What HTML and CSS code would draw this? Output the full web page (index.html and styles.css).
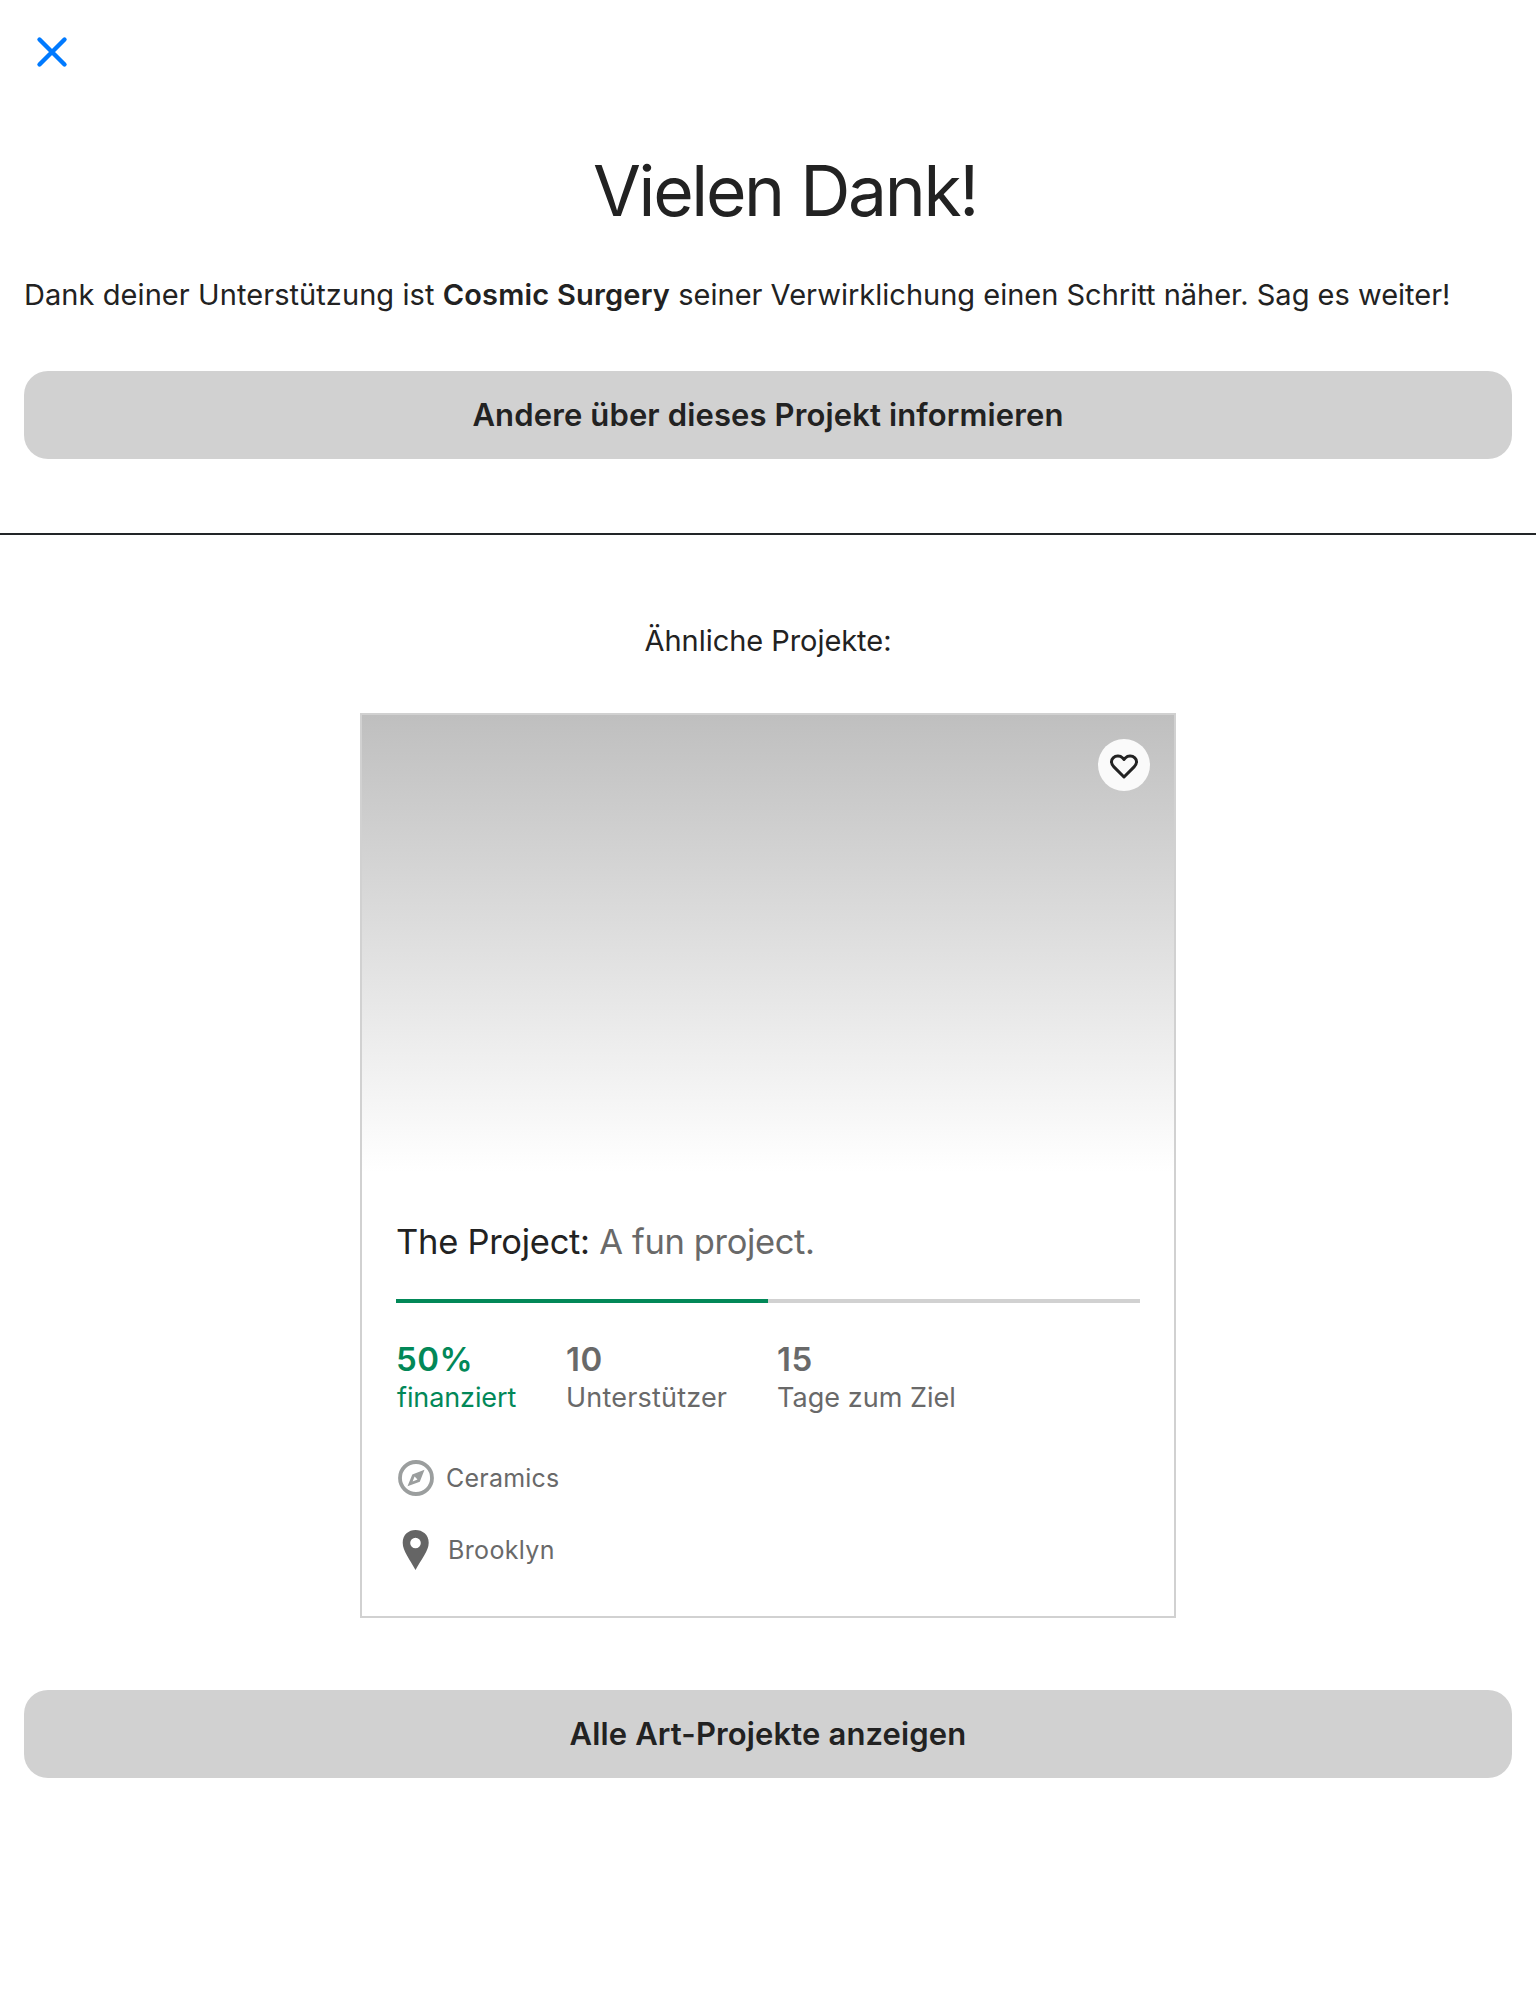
FILE: index.html
```html
<!DOCTYPE html>
<html lang="de">
<head>
<meta charset="utf-8">
<title>Vielen Dank!</title>
<link rel="stylesheet" href="styles.css">
</head>
<body>
<header class="topbar">
  <button class="close" aria-label="Schließen">
    <svg width="32" height="32" viewBox="0 0 32 32"><path d="M3.5 3.5 28.5 28.5M28.5 3.5 3.5 28.5" fill="none" stroke="#007aff" stroke-width="4.4" stroke-linecap="round"/></svg>
  </button>
</header>
<main>
  <section class="thanks">
    <h1 class="title">Vielen Dank!</h1>
    <p class="message"><span class="lead">Dank deiner Unterstützung ist</span> <strong>Cosmic Surgery</strong> seiner Verwirklichung einen Schritt näher. Sag es weiter!</p>
    <button class="button">Andere über dieses Projekt informieren</button>
  </section>
  <section class="related">
    <h2 class="related-title">Ähnliche Projekte:</h2>
    <article class="card">
      <div class="photo">
        <button class="save" aria-label="Merken">
          <svg width="32" height="32" viewBox="0 0 32 32"><path d="M16 28 5.9 17.9C2.8 14.8 2.8 11 5.2 8.8 8 6.2 12.2 6.6 14.4 8.8L16 10.4 17.6 8.8C19.8 6.6 24 6.2 26.8 8.8 29.2 11 29.2 14.8 26.1 17.9Z" fill="none" stroke="#222" stroke-width="3" stroke-linejoin="round"/></svg>
        </button>
      </div>
      <div class="details">
        <h3 class="name">The Project: <span class="blurb">A fun project.</span></h3>
        <div class="progress"><div class="progress-fill" style="width:50%"></div></div>
        <dl class="stats">
          <div class="stat funded"><dt>50%</dt><dd>finanziert</dd></div>
          <div class="stat"><dt>10</dt><dd>Unterstützer</dd></div>
          <div class="stat"><dt>15</dt><dd>Tage zum Ziel</dd></div>
        </dl>
        <div class="tag category">
          <svg width="36" height="36" viewBox="0 0 36 36"><circle cx="18" cy="18" r="16" fill="none" stroke="#9b9e9e" stroke-width="3.8"/><path fill="#9b9e9e" fill-rule="evenodd" d="M26.5 9.7 21.8 21.7 9.5 26.3 14.3 14.5ZM16.6 16.6 14.6 21.6 19.5 19.5Z"/></svg>
          <span>Ceramics</span>
        </div>
        <div class="tag place">
          <svg width="36" height="40" viewBox="0 0 36 40"><path fill="#656565" fill-rule="evenodd" d="M17.5 0C24.5 0 30.7 4.6 30.7 12.7 30.7 21 23 29.5 17.5 40 12 29.5 4.7 21 4.7 12.7 4.7 4.6 10.7 0 17.5 0ZM17.5 7.7A5.3 5.3 0 1 0 17.5 18.3 5.3 5.3 0 1 0 17.5 7.7Z"/></svg>
          <span>Brooklyn</span>
        </div>
      </div>
    </article>
    <button class="button">Alle Art-Projekte anzeigen</button>
  </section>
</main>
</body>
</html>
```
FILE: styles.css
```css
* { box-sizing: border-box; margin: 0; padding: 0; }
body {
  min-height: 2000px;
  background: #fff;
  color: #222;
  font-family: Inter, "Liberation Sans", sans-serif;
}
button { border: 0; font: inherit; color: inherit; }
svg { display: block; flex: none; }

.topbar { height: 104px; padding: 36px; }
.close { background: none; }

.thanks {
  display: flex;
  flex-direction: column;
  padding: 37px 24px 74px;
  border-bottom: 2px solid #222528;
}
.title {
  padding-left: 34px;
  font-size: 69.5px;
  font-weight: 400;
  line-height: 100px;
  letter-spacing: -2.3px;
  text-align: center;
}
.message {
  margin: 34px 0 56px;
  font-size: 29px;
  line-height: 40px;
  white-space: nowrap;
}
.lead { letter-spacing: 0.07px; }
.message strong { font-weight: 600; letter-spacing: 0.2px; }
.button {
  width: 100%;
  height: 88px;
  padding-bottom: 2px;
  border-radius: 24px;
  background: #d1d1d1;
  font-size: 31px;
  font-weight: 600;
  letter-spacing: 0.13px;
}

.related {
  display: flex;
  flex-direction: column;
  align-items: center;
  padding: 86px 24px 0;
}
.related-title {
  font-size: 29px;
  font-weight: 400;
  line-height: 40px;
  letter-spacing: -0.05px;
}
.card {
  width: 816px;
  height: 905px;
  margin: 52px 0 72px;
  border: 2px solid #d1d1d1;
}
.photo {
  display: flex;
  justify-content: flex-end;
  align-items: flex-start;
  height: 457px;
  padding: 24px;
  background: linear-gradient(#bfbfbf, #fff);
}
.save {
  display: flex;
  align-items: center;
  justify-content: center;
  width: 52px;
  height: 52px;
  border-radius: 50%;
  background: #fafafa;
}
.details { padding: 48px 34px 0; }
.name {
  font-size: 34.5px;
  font-weight: 400;
  line-height: 44px;
  letter-spacing: -0.27px;
}
.blurb { color: #696969; letter-spacing: -0.36px; }
.progress { height: 4px; margin: 35px 0 36px; background: #d1d1d1; }
.progress-fill { height: 4px; background: #028858; }
.stats {
  display: grid;
  grid-template-columns: 170px 211px auto;
  color: #696969;
}
.funded { color: #028858; }
.stat dt {
  font-size: 33px;
  font-weight: 600;
  line-height: 40px;
  letter-spacing: 0.45px;
}
.stat dd { font-size: 27px; line-height: 38px; letter-spacing: 0.2px; }
.stat:last-child dd { letter-spacing: 0.04px; }
.funded dd { padding-left: 1px; letter-spacing: -0.1px; }
.tag {
  display: flex;
  align-items: center;
  color: #696969;
  font-size: 25px;
}
.tag svg { margin-left: 2px; }
.category { height: 36px; margin-top: 43px; gap: 12px; letter-spacing: 0.21px; }
.place { height: 40px; margin-top: 34px; gap: 14px; letter-spacing: 0.35px; }
```
